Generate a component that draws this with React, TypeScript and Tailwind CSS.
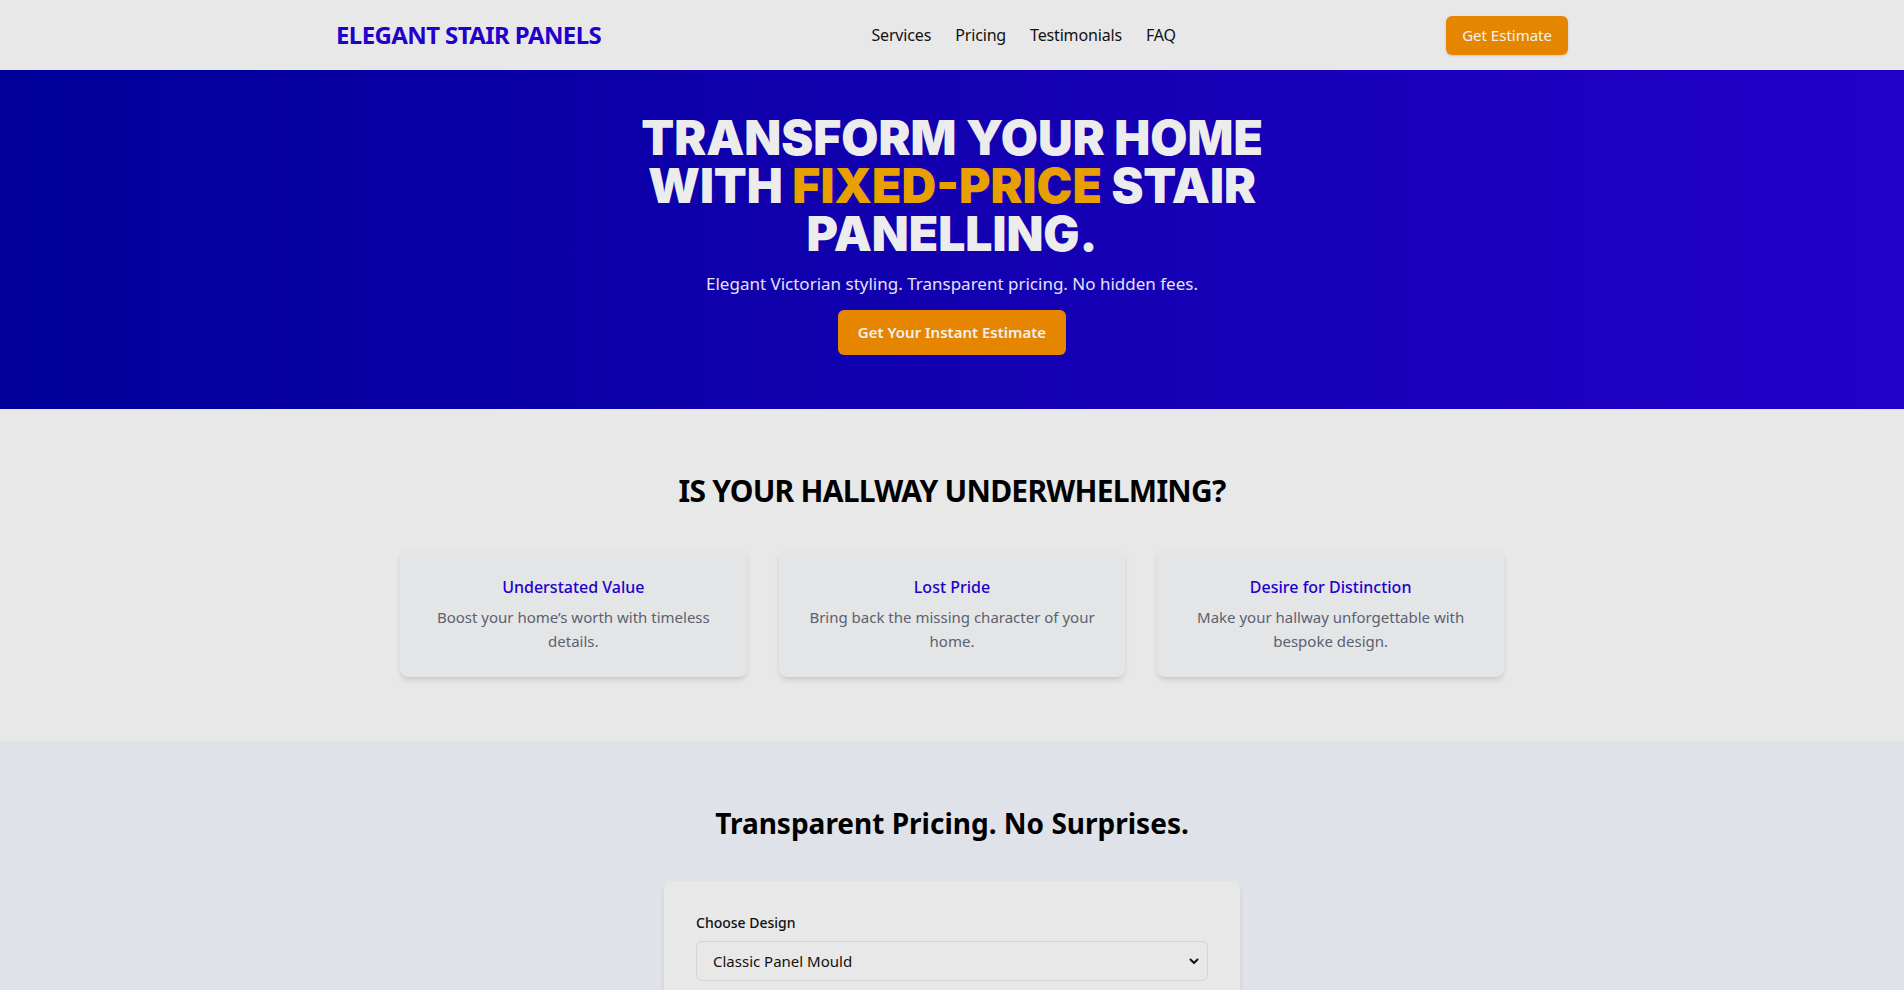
import React from "react"

const font = "font-['Segoe_UI','Noto_Sans',sans-serif]"

function Header() {
  return (
    <header className="bg-[#e8e8e8] h-[70px]">
      <div className="max-w-7xl mx-auto px-6 h-full flex items-center justify-between">
        <div className="text-2xl font-bold text-[#2200cc] tracking-tight">ELEGANT STAIR PANELS</div>
        <nav className="flex items-center gap-6 text-base text-[#111111] tracking-[-0.01em]">
          <a href="#services">Services</a>
          <a href="#pricing">Pricing</a>
          <a href="#testimonials">Testimonials</a>
          <a href="#faq">FAQ</a>
        </nav>
        <button className="bg-[#e68600] text-[#f2f2f2] rounded-md px-4 h-[39px] text-[15px] shadow-sm">
          Get Estimate
        </button>
      </div>
    </header>
  )
}

function Hero() {
  return (
    <section className="bg-gradient-to-r from-[#000099] to-[#2200c8] pt-[44px] pb-[54px] px-6 text-center">
      <h1 className="max-w-2xl mx-auto text-5xl leading-[48px] font-black text-[#ececec] uppercase font-['Inter','Noto_Sans',sans-serif]">
        Transform your home with <span className="text-[#e89f00]">fixed-price</span> stair panelling.
      </h1>
      <p className="mt-3 text-[17px] leading-7 text-[#e2e2f4]">Elegant Victorian styling. Transparent pricing. No hidden fees.</p>
      <button className="mt-3 bg-[#e68600] text-[#f0f0f0] font-semibold rounded-md px-5 h-[45px] text-[15px]">
        Get Your Instant Estimate
      </button>
    </section>
  )
}

const problems = [
  { title: "Understated Value", text: "Boost your home’s worth with timeless details." },
  { title: "Lost Pride", text: "Bring back the missing character of your home." },
  { title: "Desire for Distinction", text: "Make your hallway unforgettable with bespoke design." },
]

function Problems() {
  return (
    <section className="py-16 bg-[#e8e8e8]">
      <h2 className="text-3xl font-bold text-center text-black mb-10 tracking-tight">IS YOUR HALLWAY UNDERWHELMING?</h2>
      <div className="max-w-6xl mx-auto px-6 grid grid-cols-3 gap-8">
        {problems.map((p) => (
          <div key={p.title} className="bg-[#e4e5e7] rounded-lg shadow-md p-6 text-center">
            <h3 className="text-base leading-7 font-medium text-[#2200cc] mb-1">{p.title}</h3>
            <p className="text-[15px] leading-6 text-[#5b6170]">{p.text}</p>
          </div>
        ))}
      </div>
    </section>
  )
}

function Pricing() {
  return (
    <section id="pricing" className="py-16 bg-[#e0e2e9]">
      <h2 className="text-[28px] leading-9 font-bold text-center text-black mb-10">Transparent Pricing. No Surprises.</h2>
      <div className="max-w-xl mx-auto bg-[#e8e8e8] rounded-lg shadow-md p-8">
        <label className="block text-sm font-medium text-[#111111]">Choose Design</label>
        <div className="relative mt-2">
          <select className="w-full h-10 appearance-none bg-[#e8e8e8] border border-[#d4d4d8] rounded-md pl-4 pr-8 text-[15px] text-[#111111]">
            <option>Classic Panel Mould</option>
            <option>Shaker Style</option>
            <option>Victorian Dado</option>
          </select>
          <svg className="absolute right-2 top-1/2 -translate-y-1/2 pointer-events-none" width="12" height="12" viewBox="0 0 12 12">
            <path d="M2.5 4.5 6 8l3.5-3.5" fill="none" stroke="#111" strokeWidth="2" strokeLinecap="round" strokeLinejoin="round" />
          </svg>
        </div>
        <label className="block text-sm font-medium text-[#111111] mt-6">Staircase Length (metres)</label>
        <input className="mt-2 w-full h-10 border border-[#d4d4d8] rounded-md px-4 text-[15px]" defaultValue="4" />
        <div className="mt-6 text-center text-2xl font-bold text-[#2200cc]">£1,250</div>
      </div>
    </section>
  )
}

export default function App() {
  return (
    <div className={`${font} bg-[#e8e8e8] min-h-screen`}>
      <Header />
      <Hero />
      <Problems />
      <Pricing />
    </div>
  )
}
